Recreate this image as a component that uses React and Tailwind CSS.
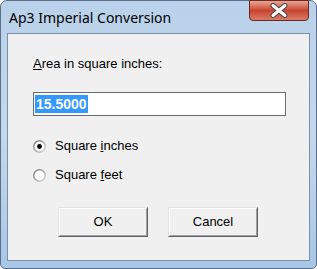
import React from "react";

function Radio({ checked }) {
  const id = checked ? "rg1" : "rg2";
  return (
    <svg width="13" height="13" viewBox="0 0 13 13" className="shrink-0">
      <defs>
        <linearGradient id={id} x1="0" y1="0" x2="1" y2="1">
          <stop offset="0" stopColor="#6f6f6f" />
          <stop offset="1" stopColor="#e0e0e0" />
        </linearGradient>
      </defs>
      <circle cx="6.5" cy="6.5" r="6.5" fill={`url(#${id})`} />
      <circle cx="6.5" cy="6.5" r="5" fill="#ffffff" />
      {checked && <circle cx="6.5" cy="6.5" r="2.4" fill="#000000" />}
    </svg>
  );
}

function CloseX() {
  return (
    <svg width="18" height="15" viewBox="0 0 18 15">
      <path d="M3 2.5 L15 12.5 M15 2.5 L3 12.5" stroke="#4a4a4a" strokeWidth="5" strokeLinecap="round" />
      <path d="M3 2.5 L15 12.5 M15 2.5 L3 12.5" stroke="#ffffff" strokeWidth="3" strokeLinecap="round" />
    </svg>
  );
}

function Button({ children }) {
  return (
    <div className="w-[90px] h-[30px] border border-t-[#e3e3e3] border-l-[#e3e3e3] border-r-[#646464] border-b-[#646464] bg-[#f0f0f0]">
      <div className="w-full h-full border border-t-white border-l-white border-r-[#a0a0a0] border-b-[#a0a0a0] flex items-center justify-center text-[13px] text-black">
        {children}
      </div>
    </div>
  );
}

export default function App() {
  return (
    <div
      className="w-[317px] h-[269px] rounded-t-[7px] rounded-b-[5px] border border-[#5b6f86] bg-gradient-to-b from-[#b9d1ea] via-[#c4d8ee] to-[#a8c6e8] flex flex-col px-[6px] pb-[7px]"
      style={{ fontFamily: '"Liberation Sans", Arial, sans-serif' }}
    >
      <div className="h-[32px] flex items-start shrink-0">
        <div
          className="pl-[2px] pt-[7px] text-[14px] leading-[20px] text-black"
          style={{ fontFamily: '"Noto Sans", "Open Sans", sans-serif' }}
        >
          Ap3 Imperial Conversion
        </div>
        <div className="ml-auto -mt-px mr-[1px] w-[60px] h-[21px] rounded-b-[4px] border border-[#6b2a20] bg-gradient-to-b from-[#e9a597] via-[#c8432f] to-[#d97b66] flex items-center justify-center">
          <CloseX />
        </div>
      </div>
      <div className="flex-1 border border-[#7d8fa5] bg-[#f0f0f0] flex flex-col pl-[25px]">
        <div className="mt-[22px] text-[13px] leading-[15px] text-black">
          <u>A</u>rea in square inches:
        </div>
        <div className="mt-[21px] w-[253px] h-[24px] border border-[#6b6b6b] bg-white flex items-center pl-[1px]">
          <span className="bg-[#3399ff] text-white font-bold text-[14px] leading-[18px] px-[1px]">15.5000</span>
        </div>
        <div className="mt-[22px] flex items-center gap-[9px] h-[16px] text-[13px] text-black">
          <Radio checked />
          <span>
            Square <u>i</u>nches
          </span>
        </div>
        <div className="mt-[13px] flex items-center gap-[9px] h-[16px] text-[13px] text-black">
          <Radio />
          <span>
            Square <u>f</u>eet
          </span>
        </div>
        <div className="mt-[24px] flex gap-[20px] ml-[25px]">
          <Button>OK</Button>
          <Button>Cancel</Button>
        </div>
      </div>
    </div>
  );
}
